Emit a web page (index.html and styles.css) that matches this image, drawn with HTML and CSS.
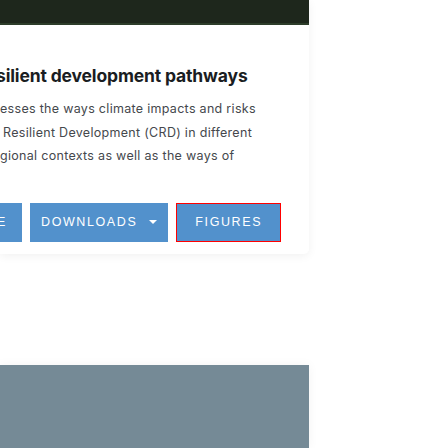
FILE: index.html
```html
<!DOCTYPE html>
<html lang="en">
<head>
<meta charset="utf-8">
<link rel="stylesheet" href="styles.css">
</head>
<body>
<div class="page">
  <section class="card">
    <div class="card-top"></div>
    <div class="card-body">
      <h2 class="title">silient development pathways</h2>
      <p class="summary">
        <span class="line l1">esses the ways climate impacts and risks</span>
        <span class="line l2">Resilient Development (CRD) in different</span>
        <span class="line l3">gional contexts as well as the ways of</span>
      </p>
      <div class="actions">
        <button class="btn btn-read">READ MORE</button>
        <button class="btn btn-dl">DOWNLOADS <span class="caret"></span></button>
        <button class="btn btn-fig">FIGURES</button>
      </div>
    </div>
  </section>
  <section class="banner"></section>
</div>
</body>
</html>
```
FILE: styles.css
```css
html, body {
  margin: 0;
  padding: 0;
  background: #ffffff;
}
body {
  font-family: Inter, "Open Sans", sans-serif;
  overflow: hidden;
}
.page {
  width: 309px;
  display: flex;
  flex-direction: column;
}
.card {
  background: #fff;
  border-radius: 0 0 5px 0;
  box-shadow: 0 2px 10px rgba(0, 0, 0, 0.06);
  overflow: hidden;
  height: 254px;
}
.card-top {
  height: 23px;
  background: #1e271c;
  border-bottom: 2px solid #2d3d2a;
}
.title {
  margin: 39px 0 0 0;
  font-size: 17.5px;
  line-height: 24px;
  font-weight: 700;
  color: #1a1d22;
  white-space: nowrap;
  text-indent: -4px;
  letter-spacing: -0.15px;
}
.summary {
  margin: 9px 0 0 0;
  font-size: 12.5px;
  line-height: 23.5px;
  letter-spacing: 0.3px;
  color: #45484d;
}
.line {
  display: block;
  white-space: nowrap;
}
.l2 { text-indent: 3px; }
.actions {
  display: flex;
  gap: 8px;
  margin: 35px 0 0 -78px;
}
.btn {
  height: 39px;
  border: 0;
  background: #5291cc;
  color: #fff;
  font-family: "Liberation Sans", Arial, sans-serif;
  font-size: 12.5px;
  letter-spacing: 1.6px;
  padding: 0 18px;
  display: flex;
  align-items: center;
  gap: 12px;
  white-space: nowrap;
  flex: none;
}
.btn-read {
  width: 100px;
  justify-content: flex-end;
  padding-right: 15px;
  overflow: hidden;
}
.btn-dl {
  padding: 0 11px 0 11px;
}
.btn-fig {
  border: 1px solid #ff0000;
  padding: 0 18px;
}
.caret {
  width: 0;
  height: 0;
  border-left: 4px solid transparent;
  border-right: 4px solid transparent;
  border-top: 4px solid #fff;
}
.banner {
  margin-top: 111px;
  height: 83px;
  background: #758a96;
  box-shadow: 0 0 10px rgba(0, 0, 0, 0.05);
}
```
